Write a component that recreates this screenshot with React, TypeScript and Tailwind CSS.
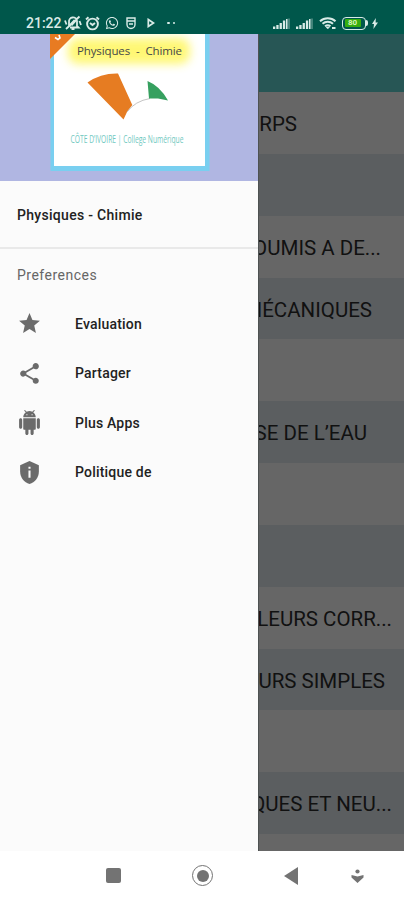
import { FaWhatsapp } from "react-icons/fa";
import { MdShare, MdStar } from "react-icons/md";

const MENU = [
  { icon: <MdStar size={25} />, label: "Evaluation" },
  { icon: <MdShare size={25} />, label: "Partager" },
  { icon: <AndroidIcon />, label: "Plus Apps" },
  { icon: <ShieldIcon />, label: "Politique de" },
];

// Only the part of each title that sticks out from under the drawer.
const LESSONS = [
  { title: "RPS", pad: "pr-[107px]" },
  { title: "", pad: "" },
  { title: "OUMIS A DE...", pad: "pr-[23px]" },
  { title: "MÉCANIQUES", pad: "pr-[32px]" },
  { title: "", pad: "" },
  { title: "SE DE L’EAU", pad: "pr-[37px]" },
  { title: "", pad: "" },
  { title: "", pad: "" },
  { title: "LEURS CORR...", pad: "pr-[12px]" },
  { title: "URS SIMPLES", pad: "pr-[19px]" },
  { title: "", pad: "" },
  { title: "QUES ET NEU...", pad: "pr-[12px]" },
  { title: "", pad: "" },
];

function AndroidIcon() {
  return (
    <svg width="25" height="25" viewBox="0 0 24 24" fill="currentColor">
      <path d="M6 18c0 .55.45 1 1 1h1v3.5c0 .83.67 1.5 1.5 1.5s1.5-.67 1.5-1.5V19h2v3.5c0 .83.67 1.5 1.5 1.5s1.5-.67 1.5-1.5V19h1c.55 0 1-.45 1-1V8H6v10zM3.5 8C2.67 8 2 8.67 2 9.5v7c0 .83.67 1.5 1.5 1.5S5 17.33 5 16.5v-7C5 8.67 4.33 8 3.5 8zm17 0c-.83 0-1.5.67-1.5 1.5v7c0 .83.67 1.5 1.5 1.5s1.5-.67 1.5-1.5v-7c0-.83-.67-1.5-1.5-1.5zm-4.97-5.84l1.3-1.3c.2-.2.2-.51 0-.71-.2-.2-.51-.2-.71 0l-1.48 1.48C13.85 1.23 12.95 1 12 1c-.96 0-1.86.23-2.66.63L7.85.15c-.2-.2-.51-.2-.71 0-.2.2-.2.51 0 .71l1.31 1.31C6.97 3.26 6 5.01 6 7h12c0-1.99-.97-3.75-2.47-4.84zM10 5H9V4h1v1zm5 0h-1V4h1v1z" />
    </svg>
  );
}

function ShieldIcon() {
  return (
    <svg width="25" height="25" viewBox="0 0 24 24" fill="currentColor">
      <path d="M12 1L3 5v6c0 5.550 3.840 10.740 9 12 5.160-1.260 9-6.450 9-12V5l-9-4z" />
      <path d="M11 6.500h2v2h-2zM11 10h2v7h-2z" fill="#fafafa" />
    </svg>
  );
}

function Signal() {
  return (
    <svg width="18" height="12" viewBox="0 0 18 12" fill="#d9ebe7">
      <path d="M0 9.500h2.300V12H0zM3.300 8h2.300v4H3.300zM6.600 6h2.300v6H6.600zM9.900 3.500h2.300V12H9.900zM13 2h1.500v10H13z" />
      <path d="M14.500 1.500H17V12h-2.500z" opacity=".3" />
    </svg>
  );
}

function StatusBar() {
  return (
    <header className="flex h-[34px] items-center bg-[#00574b] pt-[12px] pl-[26px] text-[#d9ebe7]">
      <span className="w-[36px] text-[14px] leading-none font-medium">21:22</span>
      {/* muted bell */}
      <svg className="ml-[2px]" width="18" height="16" viewBox="0 0 18 16" fill="none" stroke="currentColor" strokeWidth="1.8">
        <path d="M5 11V7a4 4 0 0 1 8-1v5l1.500 1.500H6M7.500 14h3M2 14 15.500 1.500M1 5.500l1.500 4M15.500 6l1.500 4" />
        <path d="M7 10 11 5.500" strokeWidth="3" />
      </svg>
      <svg className="ml-[3px]" width="15" height="15" viewBox="0 0 15 15" fill="none" stroke="currentColor" strokeWidth="1.9">
        <circle cx="7.500" cy="8" r="5.400" />
        <path d="M1 3.500 3.500 1.200M14 3.500l-2.500-2.300M5 7l2.500 2L10 7" />
      </svg>
      <FaWhatsapp className="ml-[5px]" size={14} />
      <svg className="ml-[7px]" width="10" height="14" viewBox="0 0 10 14" fill="none" stroke="currentColor" strokeWidth="1.400">
        <path d="M1 2h8v6.500a4 4 0 0 1-8 0zM1.500 5H9M3 8h4" />
      </svg>
      <svg className="ml-[11px]" width="8" height="10" viewBox="0 0 8 10" fill="none" stroke="currentColor" strokeWidth="1.700">
        <path d="M1.300 1.500 6.500 5 1.300 8.500z" />
      </svg>
      <span className="ml-[12px] size-[2.5px] rounded-full bg-current" />
      <span className="ml-[3px] size-[2.5px] rounded-full bg-current" />
      <div className="mr-[26px] ml-auto flex items-center gap-[5px]">
        <Signal />
        <Signal />
        <svg width="18" height="14" viewBox="0 0 18 14" fill="none" stroke="currentColor" strokeWidth="2">
          <path d="M1 5.200a11.500 11.500 0 0 1 15.500 0M3.500 7.800a8 8 0 0 1 10.500 0M6 10.200a4.600 4.600 0 0 1 5.500 0" />
          <path d="m7 11 1.800 2 1.700-2z" fill="currentColor" strokeWidth=".5" />
          <path d="M13 12h3.500" />
        </svg>
        <div className="flex items-center">
          <span className="flex h-[13px] w-[24px] rounded-[4px] border-[1.5px] border-[#d9ebe7] p-[1.5px]">
            <span className="flex w-[16px] items-center justify-center rounded-[1px] bg-[#36ad0d] text-[8px] leading-none font-bold text-[#d6f5b8]">
              80
            </span>
          </span>
          <span className="h-[6px] w-[2px] rounded-r bg-[#d9ebe7]" />
          <svg className="ml-[4px]" width="6" height="11" viewBox="0 0 6 11" fill="currentColor">
            <path d="M3.800 0 0 6h2l-.6 5L6 4.500H3.600z" />
          </svg>
        </div>
      </div>
    </header>
  );
}

function Logo() {
  return (
    <svg className="ml-[50px]" width="160" height="137" viewBox="50 34 160 137">
      <defs>
        <filter id="glow" x="-20%" y="-60%" width="140%" height="220%">
          <feGaussianBlur stdDeviation="5" />
        </filter>
        <clipPath id="card">
          <path d="M54 34h151v132H54z" />
        </clipPath>
      </defs>
      <path d="M50.500 34h159v137h-159z" fill="#79cff0" />
      <path d="M54 34h151v132H54z" fill="#fff" />
      <g clipPath="url(#card)">
        <rect x="68" y="38" width="122" height="26" rx="10" fill="#fff766" opacity=".9" filter="url(#glow)" />
      </g>
      <path d="M49 34h26L49 60z" fill="#e87b22" />
      <path d="M55 37.500l3 2 2-1.500-1-3" fill="none" stroke="#fff" strokeWidth="1.600" />
      <text x="77" y="55" fontFamily="'Open Sans', sans-serif" fontSize="11.500" wordSpacing="3" textLength="105" fill="#45494a">
        Physiques - Chimie
      </text>
      <path d="M87.500 82.500Q101 73 118 73.500L132.300 105 127 112l-3.500 7.500z" fill="#e67c22" />
      <path d="M127 112Q135 101 150 98.500" fill="none" stroke="#c4c4c4" strokeWidth="1" />
      <path d="M147.500 81Q160 86 168 100.500L158 98.500 149 98.500z" fill="#36a05f" />
      <text
        x="70.500"
        y="143"
        fontFamily="'Open Sans', sans-serif"
        fontSize="10"
        textLength="113"
        lengthAdjust="spacingAndGlyphs"
        fill="#72c9bf"
      >
        CÔTE D’IVOIRE | College Numérique
      </text>
    </svg>
  );
}

function Drawer() {
  return (
    <aside className="w-[258px] shrink-0 bg-[#fbfbfb] text-[14px] font-medium text-[#222]">
      <div className="h-[147px] bg-[#b0b6e2]">
        <Logo />
      </div>
      <div className="flex h-[68px] items-center border-b-2 border-[#e9e9e9] pt-[3px] pl-[17px] tracking-[0.3px]">
        Physiques - Chimie
      </div>
      <h2 className="flex h-[50px] items-center pt-[2px] pl-[17px] font-normal tracking-[0.5px] text-[#666]">Preferences</h2>
      <nav>
        {MENU.map((item) => (
          <a key={item.label} className="flex h-[49.5px] items-center pl-[17px] text-[#6b6b6b]">
            {item.icon}
            <span className="ml-[33px] pt-[1px] tracking-[0.2px] whitespace-nowrap text-[#222]">{item.label}</span>
          </a>
        ))}
      </nav>
    </aside>
  );
}

function LessonList() {
  return (
    <main className="min-w-0 flex-1 overflow-hidden border-l border-[#4e5252] bg-[#666]">
      <div className="h-[58px] bg-[#275655]" />
      {LESSONS.map((lesson, i) => (
        <div
          key={i}
          className={`flex h-[61.85px] items-center justify-end pt-[3px] text-[20.5px] whitespace-nowrap text-[#111] ${lesson.pad} ${
            i % 2 ? "bg-[#5b5e60]" : "bg-[#666]"
          }`}
        >
          {lesson.title}
        </div>
      ))}
    </main>
  );
}

function NavBar() {
  return (
    <footer className="flex h-[49px] items-center bg-white pl-[106px] text-[#737373]">
      <span className="size-[15px] rounded-[2px] bg-current" />
      <span className="ml-[71px] flex size-[21px] items-center justify-center rounded-full border-[1.5px] border-current">
        <span className="size-[12px] rounded-full bg-current" />
      </span>
      <svg className="ml-[71px]" width="14" height="18" viewBox="0 0 14 18" fill="currentColor">
        <path d="M14 0v18L0 9z" />
      </svg>
      <svg className="ml-[53px]" width="13" height="14" viewBox="0 0 13 14" fill="currentColor">
        <circle cx="6.500" cy="2.500" r="2.100" />
        <path d="M.5 6 6.500 7.500l6-1.500v2.500l-6 5.500-6-5.500z" />
      </svg>
    </footer>
  );
}

export default function App() {
  return (
    <div className="flex h-[900px] w-[404px] flex-col overflow-hidden font-[Roboto,sans-serif]">
      <StatusBar />
      <div className="flex h-[817px] overflow-hidden">
        <Drawer />
        <LessonList />
      </div>
      <NavBar />
    </div>
  );
}
